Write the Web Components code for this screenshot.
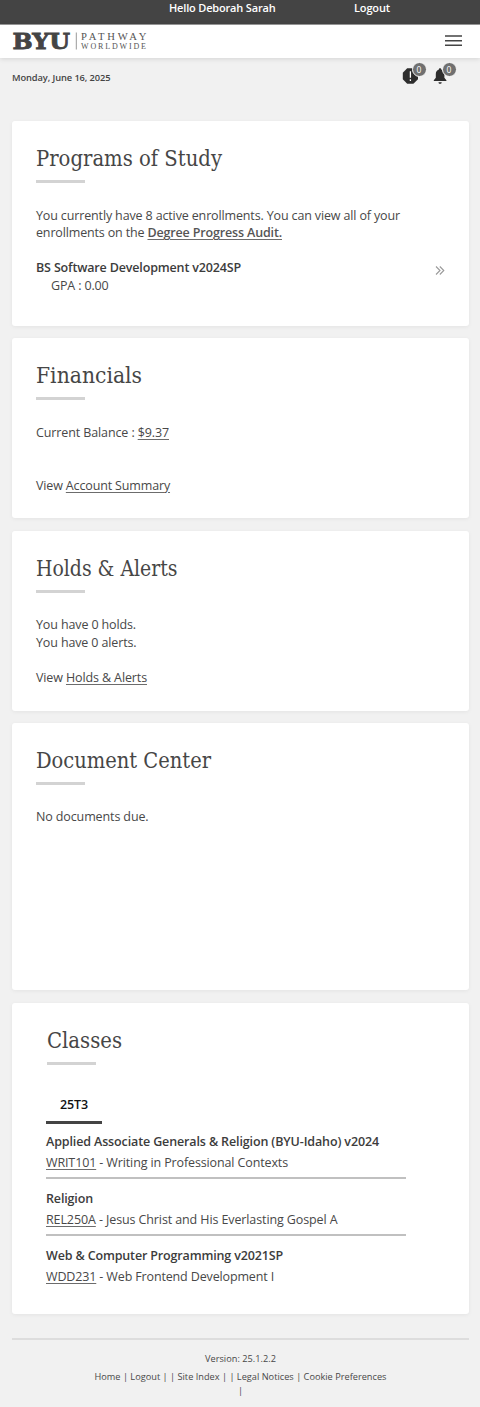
<!DOCTYPE html>
<html lang="en">
<head>
<meta charset="utf-8">
<title>Pathway Portal</title>
<style>
html,body{margin:0;background:#f1f1f1}
body{font-family:"Open Sans","Noto Sans",sans-serif;font-size:12.5px;color:#484848}
</style>
</head>
<body>
<portal-page></portal-page>
<script>
const base = 'a{color:inherit;text-decoration:underline;text-decoration-color:#6c6c6c;text-underline-offset:1.5px;text-decoration-thickness:1px}b{font-weight:600;color:#3c3c3c}';
function define(name, html, after) {
  const t = document.createElement('template');
  t.innerHTML = html;
  customElements.define(name, class extends HTMLElement {
    constructor() { super(); this.attachShadow({mode:'open'}).append(t.content.cloneNode(true)); }
    connectedCallback() { if (after) after(this); }
  });
}

// One line of text that fills the width given in "w": tracked, or with "stretch" scaled.
define('text-line', `<style>:host{display:block;white-space:nowrap;height:var(--lh,17.6px);line-height:var(--lh,17.6px);letter-spacing:0}span{display:inline-block;transform-origin:0 50%}</style><span><slot></slot></span>`, el => {
  const w = parseFloat(el.getAttribute('w'));
  if (!w) return;
  const span = el.shadowRoot.querySelector('span');
  const natural = span.offsetWidth ? span.getBoundingClientRect().width : w;
  if (el.hasAttribute('stretch')) {
    span.style.transform = `scaleX(${w / natural})`;
  } else {
    el.style.letterSpacing = ((w - natural) / el.textContent.length).toFixed(4) + 'px';
  }
});

define('byu-logo', `<style>:host{display:block;width:137px;height:20px}svg{display:block;overflow:visible}</style>
<svg width="137" height="20" viewBox="0 0 137 20">
<text x="0.6" y="18.3" font-family="DejaVu Serif" font-weight="bold" font-size="23" textLength="57.5" lengthAdjust="spacingAndGlyphs" fill="#444" stroke="#444" stroke-width=".9">BYU</text>
<rect x="63.8" y="1.5" width="1" height="17" fill="#999"/>
<text x="69" y="8.8" font-family="Liberation Serif" font-size="10.6" textLength="65.5" lengthAdjust="spacing" fill="#555">PATHWAY</text>
<text x="69" y="18.2" font-family="Liberation Serif" font-size="8" textLength="65" lengthAdjust="spacing" fill="#555">WORLDWIDE</text>
</svg>`);

define('top-bar', `<style>:host{display:flex;box-sizing:border-box;height:25px;background:#444;border-bottom:1px solid #999;color:#fff;font-size:11px;font-weight:600;padding-left:169px;--lh:16px}text-line:first-of-type{width:185px}</style>
<text-line w="106.5">Hello Deborah Sarah</text-line><text-line w="36">Logout</text-line>`);

define('nav-bar', `<style>:host{display:flex;justify-content:space-between;box-sizing:border-box;height:33px;background:#fff;padding:6px 18px 0 12px;box-shadow:0 1px 5px rgba(0,0,0,.12)}svg{margin-top:4px}</style>
<byu-logo></byu-logo><svg width="17" height="12" viewBox="0 0 17 12"><path d="M0 1h17M0 5.7h17M0 10.3h17" stroke="#444" stroke-width="1.5"/></svg>`);

define('icon-badge', `<style>:host{display:block;position:relative;width:30px;height:26px}span{position:absolute;left:10px;top:-1px;width:13px;height:13px;border:1px solid #fafafa;border-radius:50%;background:#707070;color:#fff;font-size:8.5px;line-height:13px;text-align:center}</style><slot></slot><span>0</span>`);

define('status-row', `<style>:host{display:flex;justify-content:space-between;height:63px;padding:0 18.5px 0 12px;font-size:9.3px;font-weight:600;color:#444;--lh:16px}text-line{margin-top:12px}div{display:flex;margin-top:5px;font-weight:400}svg{display:block;margin-top:4px}</style>
<text-line w="98.5">Monday, June 16, 2025</text-line>
<div><icon-badge><svg width="17" height="18" viewBox="0 0 17 18"><path d="M5.2 1.2h6.2L16 5.8v6.4l-4.6 4.6H5.2L.8 12.2V5.8z" fill="#2d2d2d"/><path d="M8.4 4.3v6.5M8.4 12.2v1.8" stroke="#fff" stroke-width="1.3"/></svg></icon-badge>
<icon-badge><svg width="17" height="18" viewBox="0 0 17 18"><path d="M8 1.2c.8 0 1.2.5 1.2 1.2 2.2.6 3.2 2.3 3.2 4.6v3.8l2 2.4v.9H1.8v-.9l2-2.4V7c0-2.3 1-4 3.1-4.6 0-.7.4-1.2 1.1-1.2zM6.5 15.2h3.2c0 1-.7 1.6-1.6 1.6s-1.6-.6-1.6-1.6z" fill="#2d2d2d"/></svg></icon-badge></div>`);

define('portal-card', `<style>:host{display:block;box-sizing:border-box;background:#fff;border-radius:3px;margin:0 11px 12.3px 12px;padding:23px 24px 0;box-shadow:0 1px 4px rgba(0,0,0,.06)}
h2{margin:0;height:36px;font:400 22px "DejaVu Serif Condensed","DejaVu Serif",serif;font-stretch:condensed;--lh:30px;color:#464646}
i{display:block;width:49px;height:3px;background:#d3d3d3;margin-bottom:23.5px}</style><h2><slot name="title"></slot></h2><i></i><slot></slot>`);

define('class-row', `<style>:host{display:block;width:360px;height:57px;box-sizing:border-box;border-bottom:2px solid #c0c0c0;padding-top:9px;--lh:21px}:host([last]){border:0}</style><slot></slot>`);

define('page-footer', `<style>:host{display:flex;flex-direction:column;align-items:center;margin:24px 11px 0 12px;border-top:2px solid #ddd;padding-top:10px;font-size:9.2px;--lh:18px}text-line:last-child{--lh:9px}</style>
<text-line w="71">Version: 25.1.2.2</text-line><text-line w="292">Home | Logout | | Site Index | | Legal Notices | Cookie Preferences</text-line><text-line>|</text-line>`);

define('portal-page', `<style>${base}:host{display:block;width:480px;height:1407px;overflow:hidden}
.gap{height:17.6px}.split{display:flex;justify-content:space-between}.split svg{margin-top:7px}
.ind{padding-left:15px}.tab{margin:-1px 0 -2px -1px;width:56px;height:37px;border-bottom:3px solid #444;box-sizing:border-box;font-weight:600;color:#111;padding:9px 0 0 14px}
.classes{padding-left:35px}.classes class-row{margin-left:-1px}.sum{font-weight:600;color:#555}</style>
<top-bar></top-bar><nav-bar></nav-bar><status-row></status-row>
<portal-card style="height:205px"><text-line slot="title" stretch w="186">Programs of Study</text-line>
<text-line w="364">You currently have 8 active enrollments. You can view all of your</text-line>
<text-line w="246">enrollments on the <a class="sum">Degree Progress Audit.</a></text-line>
<div class="gap"></div>
<div class="split"><div><text-line w="205"><b>BS Software Development v2024SP</b></text-line><text-line class="ind" w="57.5">GPA : 0.00</text-line></div>
<svg width="10" height="9" viewBox="0 0 10 9"><path d="M1 .5l4 4-4 4M4.8.5l4 4-4 4" fill="none" stroke="#999" stroke-width="1.1"/></svg></div>
</portal-card>
<portal-card style="height:180px"><text-line slot="title" stretch w="106">Financials</text-line>
<text-line w="133">Current Balance : <a>$9.37</a></text-line><div class="gap"></div><div class="gap"></div>
<text-line w="134">View <a>Account Summary</a></text-line></portal-card>
<portal-card style="height:180px"><text-line slot="title" stretch w="141.5">Holds &amp; Alerts</text-line>
<text-line w="100">You have 0 holds.</text-line><text-line w="100.5">You have 0 alerts.</text-line><div class="gap"></div>
<text-line w="111">View <a>Holds &amp; Alerts</a></text-line></portal-card>
<portal-card style="height:267.5px"><text-line slot="title" stretch w="175">Document Center</text-line>
<text-line w="112.5">No documents due.</text-line></portal-card>
<portal-card class="classes" style="height:311px"><text-line slot="title" stretch w="75">Classes</text-line>
<div class="tab"><text-line w="28">25T3</text-line></div>
<class-row><text-line w="333"><b>Applied Associate Generals &amp; Religion (BYU-Idaho) v2024</b></text-line><text-line w="242"><a>WRIT101</a> - Writing in Professional Contexts</text-line></class-row>
<class-row><text-line w="47"><b>Religion</b></text-line><text-line w="291.5"><a>REL250A</a> - Jesus Christ and His Everlasting Gospel A</text-line></class-row>
<class-row last><text-line w="237"><b>Web &amp; Computer Programming v2021SP</b></text-line><text-line w="228"><a>WDD231</a> - Web Frontend Development I</text-line></class-row>
</portal-card>
<page-footer></page-footer>`);
</script>
</body>
</html>
